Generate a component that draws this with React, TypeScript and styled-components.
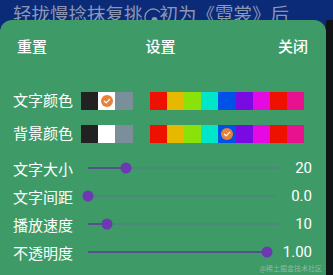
import styled, { createGlobalStyle } from 'styled-components'

const GlobalStyle = createGlobalStyle`
  html, body {
    margin: 0;
    padding: 0;
    background: #111417;
  }
  body {
    font-family: Roboto, "Noto Sans CJK SC", sans-serif;
  }
`

const basicColors = ['#222222', '#ffffff', '#7b8f9b']
const richColors = [
  '#ee1000',
  '#e7b800',
  '#8ae20a',
  '#00e6c9',
  '#0052e6',
  '#7a0ae2',
  '#e60ae2',
  '#ee1000',
  '#e8128e',
]

const sliders = [
  { label: '文字大小', value: '20', percent: 20 },
  { label: '文字间距', value: '0.0', percent: 0 },
  { label: '播放速度', value: '10', percent: 10 },
  { label: '不透明度', value: '1.00', percent: 100 },
]

const CheckMark = () => (
  <CheckIcon viewBox="0 0 12 12">
    <circle cx="6" cy="6" r="6" fill="#e8823a" />
    <path d="M3.4 6.2 L5.2 7.9 L8.6 4.3" fill="none" stroke="#fff" strokeWidth="1.2" strokeLinecap="round" strokeLinejoin="round" />
  </CheckIcon>
)

const LyricIcon = () => (
  <LyricSvg viewBox="0 0 18 18">
    <path d="M2.5 15 A7.5 7.5 0 0 1 16 5.5" fill="none" stroke="#8b98b4" strokeWidth="1.3" />
    <circle cx="10.5" cy="13" r="3" fill="#8b98b4" />
  </LyricSvg>
)

const App = () => {
  return (
    <>
      <GlobalStyle />
      <Screen>
        <LyricBar>
          <span>轻拢慢捻抹复挑</span>
          <LyricIcon />
          <span>初为《霓裳》后</span>
        </LyricBar>
        <Body>
          <Panel>
            <Header>
              <HeaderButton>重置</HeaderButton>
              <HeaderTitle>设置</HeaderTitle>
              <HeaderButton>关闭</HeaderButton>
            </Header>

            <ColorSection>
              <ColorRow>
                <Label>文字颜色</Label>
                <SwatchGroup>
                  {basicColors.map((c, i) => (
                    <Swatch key={i} color={c}>{i === 1 && <CheckMark />}</Swatch>
                  ))}
                </SwatchGroup>
                <SwatchGroup>
                  {richColors.map((c, i) => (
                    <Swatch key={i} color={c} />
                  ))}
                </SwatchGroup>
              </ColorRow>
              <ColorRow>
                <Label>背景颜色</Label>
                <SwatchGroup>
                  {basicColors.map((c, i) => (
                    <Swatch key={i} color={c} />
                  ))}
                </SwatchGroup>
                <SwatchGroup>
                  {richColors.map((c, i) => (
                    <Swatch key={i} color={c}>{i === 4 && <CheckMark />}</Swatch>
                  ))}
                </SwatchGroup>
              </ColorRow>
            </ColorSection>

            <SliderSection>
              {sliders.map((s) => (
                <SliderRow key={s.label}>
                  <SliderLabel>{s.label}</SliderLabel>
                  <SliderTrack>
                    <TrackFill style={{ width: `${s.percent}%` }} />
                    <Thumb style={{ left: `${s.percent}%` }} />
                  </SliderTrack>
                  <Value>{s.value}</Value>
                </SliderRow>
              ))}
            </SliderSection>

            <Watermark>@稀土掘金技术社区</Watermark>
          </Panel>
          <EdgeStrip />
        </Body>
      </Screen>
    </>
  )
}

export default App

const Screen = styled.div`
  width: 333px;
  height: 275px;
  display: flex;
  flex-direction: column;
  overflow: hidden;
  background: #0b2a78;
`

const LyricBar = styled.div`
  height: 20px;
  padding: 3px 0 0 13px;
  box-sizing: border-box;
  display: flex;
  align-items: flex-start;
  color: #8b98b4;
  font-size: 18.5px;
  line-height: 24px;
  white-space: nowrap;
  overflow: hidden;
  flex-shrink: 0;
`

const LyricSvg = styled.svg`
  width: 18px;
  height: 18px;
  margin: 4px -2px 0 1px;
  flex-shrink: 0;
`

const Body = styled.div`
  flex: 1;
  display: flex;
  background: linear-gradient(#0b2a78 0, #0b2a78 12px, #111417 12px);
`

const Panel = styled.div`
  position: relative;
  width: 326px;
  height: 100%;
  background: #3e9b68;
  border-radius: 12px 12px 0 0;
  color: #ffffff;
`

const EdgeStrip = styled.div`
  flex: 1;
  background: #111417;
`

const Header = styled.div`
  height: 50px;
  padding: 0 18px 0 17px;
  display: flex;
  align-items: center;
  justify-content: space-between;
  font-size: 15px;
  font-weight: 500;
`

const HeaderButton = styled.span`
  width: 40px;

  &:last-child {
    text-align: right;
  }
`

const HeaderTitle = styled.span`
  margin-right: 4px;
`

const ColorSection = styled.div`
  margin-top: 22px;
  padding-left: 13px;
  display: flex;
  flex-direction: column;
  gap: 15px;
`

const ColorRow = styled.div`
  display: flex;
  align-items: center;
  height: 18px;
  gap: 8px;

  & > div:last-child {
    margin-left: 9px;
  }
`

const Label = styled.span`
  width: 60px;
  font-size: 15px;
  line-height: 18px;
  white-space: nowrap;
`

const SwatchGroup = styled.div`
  display: flex;
  height: 18px;
`

const Swatch = styled.div<{ color: string }>`
  width: 17.2px;
  height: 18px;
  background: ${(p) => p.color};
  display: flex;
  align-items: center;
  justify-content: center;
`

const CheckIcon = styled.svg`
  width: 12px;
  height: 12px;
`

const SliderSection = styled.div`
  margin-top: 11px;
  padding: 0 14px 0 13px;
  display: flex;
  flex-direction: column;
`

const SliderRow = styled.div`
  height: 28px;
  display: flex;
  align-items: center;
`

const SliderLabel = styled.span`
  width: 75px;
  font-size: 15px;
  white-space: nowrap;
`

const SliderTrack = styled.div`
  position: relative;
  flex: 1;
  height: 2px;
  background: #4a8a78;
`

const TrackFill = styled.div`
  height: 100%;
  background: #57508e;
`

const Thumb = styled.div`
  position: absolute;
  top: 50%;
  width: 11px;
  height: 11px;
  border-radius: 50%;
  background: #6c39b3;
  transform: translate(-50%, -50%);
`

const Value = styled.span`
  margin-left: 16px;
  font-size: 15px;
  text-align: right;
`

const Watermark = styled.span`
  position: absolute;
  right: 4px;
  bottom: 2px;
  font-size: 7px;
  color: rgba(210, 210, 220, 0.55);
`
